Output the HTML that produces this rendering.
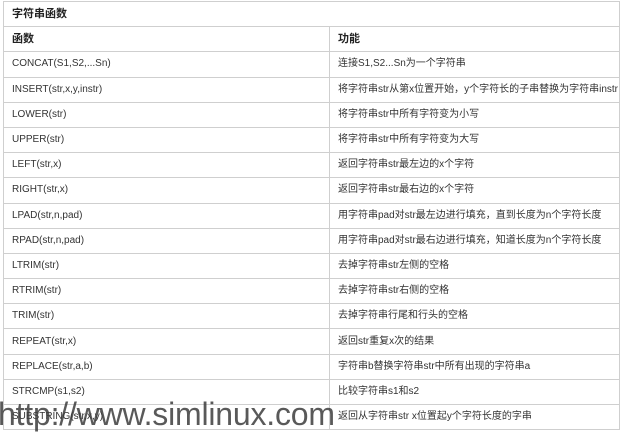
<!DOCTYPE html>
<html><head><meta charset="utf-8"><style>
html,body{margin:0;padding:0;background:#fff;width:624px;height:433px;overflow:hidden;position:relative}
table{position:absolute;left:3px;top:1px;border-collapse:collapse;width:616px;table-layout:fixed;font-family:"Liberation Sans","Noto Sans CJK SC",sans-serif;font-size:10px;color:#333}
tr{height:25.2px}
td{border:1px solid #cfcfcf;height:25.2px;line-height:12px;padding:0 0 0 8px;box-sizing:border-box;white-space:nowrap;overflow:hidden;vertical-align:middle}
.b{font-weight:bold;font-size:11px;color:#222}
.wm{position:absolute;left:-2px;top:396px;font-family:"Liberation Sans",sans-serif;font-size:32px;line-height:36px;color:rgba(60,60,60,0.85);letter-spacing:-0.2px}
</style></head><body>
<table>
<colgroup><col style="width:326px"><col style="width:290px"></colgroup>
<tr><td colspan="2" class="b">字符串函数</td></tr>
<tr><td class="b">函数</td><td class="b">功能</td></tr>
<tr><td>CONCAT(S1,S2,...Sn)</td><td>连接S1,S2...Sn为一个字符串</td></tr>
<tr><td>INSERT(str,x,y,instr)</td><td>将字符串str从第x位置开始，y个字符长的子串替换为字符串instr</td></tr>
<tr><td>LOWER(str)</td><td>将字符串str中所有字符变为小写</td></tr>
<tr><td>UPPER(str)</td><td>将字符串str中所有字符变为大写</td></tr>
<tr><td>LEFT(str,x)</td><td>返回字符串str最左边的x个字符</td></tr>
<tr><td>RIGHT(str,x)</td><td>返回字符串str最右边的x个字符</td></tr>
<tr><td>LPAD(str,n,pad)</td><td>用字符串pad对str最左边进行填充，直到长度为n个字符长度</td></tr>
<tr><td>RPAD(str,n,pad)</td><td>用字符串pad对str最右边进行填充，知道长度为n个字符长度</td></tr>
<tr><td>LTRIM(str)</td><td>去掉字符串str左侧的空格</td></tr>
<tr><td>RTRIM(str)</td><td>去掉字符串str右侧的空格</td></tr>
<tr><td>TRIM(str)</td><td>去掉字符串行尾和行头的空格</td></tr>
<tr><td>REPEAT(str,x)</td><td>返回str重复x次的结果</td></tr>
<tr><td>REPLACE(str,a,b)</td><td>字符串b替换字符串str中所有出现的字符串a</td></tr>
<tr><td>STRCMP(s1,s2)</td><td>比较字符串s1和s2</td></tr>
<tr><td>SUBSTRING(str,x,y)</td><td>返回从字符串str x位置起y个字符长度的字串</td></tr>
</table>
<div class="wm">http://www.simlinux.com</div>
</body></html>
